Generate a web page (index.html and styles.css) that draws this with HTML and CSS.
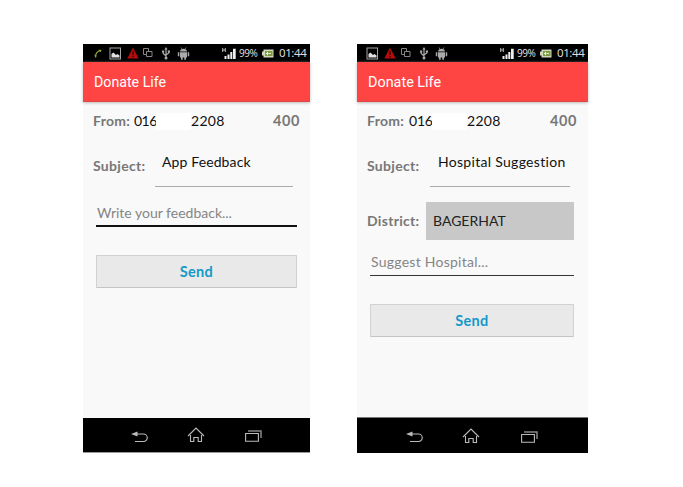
FILE: index.html
```html
<!DOCTYPE html>
<html lang="en">
<head>
<meta charset="utf-8">
<title>Donate Life</title>
<link rel="stylesheet" href="styles.css">
</head>
<body>
<svg width="0" height="0" class="defs">
  <symbol id="call" viewBox="0 0 8 9"><path d="M1.500 8C1.500 5 3 2.500 6 1.500" fill="none" stroke="#8ea63a" stroke-width="1.100"/><path d="M4.500 .8l3 0-.6 2.200-1.500-.5M.5 5.500l2 .8-.3 2.200H1z" fill="#8ea63a"/></symbol>
  <symbol id="image" viewBox="0 0 13 13"><rect x="1" y="1" width="10.500" height="11" fill="none" stroke="#a5a5a5"/><path d="M2.500 10.500V7l2-1.500L7 8l1.500-1L10.500 8.500v2z" fill="#e0e0e0"/></symbol>
  <symbol id="warn" viewBox="0 0 12 12"><path d="M6 .5L11.700 11.500H.3z" fill="#b50d0d"/><path d="M6 4v4M6 9v1.300" stroke="#3b0000" stroke-width="1.300"/></symbol>
  <symbol id="copies" viewBox="0 0 10 10"><path d="M3.500 6.500H.5v-6h5v3M3.500 3.500h5.500v5H3.500z" fill="none" stroke="#858585" stroke-width="1"/></symbol>
  <symbol id="usb" viewBox="0 0 8 13"><path d="M4 2v9M1.200 4v2.500L4 9M6.800 4v2L4 8" fill="none" stroke="#aaa" stroke-width="1.200"/><path d="M4 0l1.600 2.500H2.400zM0 3.500h2.200v2H0zM5.800 3.500H8v2H5.800z" fill="#aaa"/><circle cx="4" cy="11" r="1.500" fill="#aaa"/></symbol>
  <symbol id="robot" viewBox="0 0 13 13"><path d="M3 4.500C3.200 2.800 4.500 1.800 6.500 1.800S9.800 2.800 10 4.500zM3 5.200h7v5.300H9v2.200H7.300v-2.200H5.700v2.200H4v-2.200H3zM.8 5.300h1.500v4H.8zM10.700 5.300h1.500v4h-1.500z" fill="#aaa"/><path d="M4 .5l1 1.800M9 .5l-1 1.800" stroke="#aaa" stroke-width=".7"/></symbol>
  <symbol id="bars" viewBox="0 0 14 11"><path d="M2.500 8h2v3h-2zM5.500 6.500h2V11h-2zM8.300 4h2v7h-2zM11 .8h2.700V11H11z" fill="#eee"/><path d="M.7 0v4M3.300 0v4M.7 2h2.600" stroke="#ccc" stroke-width=".9"/></symbol>
  <symbol id="battery" viewBox="0 0 12 9"><path d="M1.500 .5h10v8h-10zM0 2.500h2v4H0z" fill="#d0d7bd"/><path d="M3 2h7.500v5H3z" fill="#7e9a45"/><path d="M4 4.500h2.500M5.500 2.800v3.400M7 4.500h2" stroke="#edf3df" stroke-width="1"/></symbol>
  <symbol id="back" viewBox="0 0 17 12"><path d="M4 3h8.500a3.500 3.500 0 0 1 0 7.500H4" fill="none" stroke="#bbb" stroke-width="1.100"/><path d="M0 3L6.500 .6v4.800z" fill="#bbb"/></symbol>
  <symbol id="home" viewBox="0 0 18 16"><path d="M1 9L9 1l8 8M3.500 8v6.500h3.300v-4h4.400v4h3.300V8" fill="none" stroke="#bbb" stroke-width="1.100"/></symbol>
  <symbol id="recent" viewBox="0 0 17 12"><path d="M.6 3.500h12.800v7.700H.6z" fill="none" stroke="#bbb" stroke-width="1.100"/><path d="M3 1h13v7" fill="none" stroke="#888" stroke-width="1.500"/></symbol>
</svg>
<main class="sheet">
  <section class="phone feedback">
    <div class="status">
      <svg class="i-call"><use href="#call"/></svg><svg class="i-image"><use href="#image"/></svg><svg class="i-warn"><use href="#warn"/></svg><svg class="i-copies"><use href="#copies"/></svg><svg class="i-usb"><use href="#usb"/></svg><svg class="i-robot"><use href="#robot"/></svg>
      <div class="right"><svg class="i-bars"><use href="#bars"/></svg><span class="pct">99%</span><svg class="i-battery"><use href="#battery"/></svg><span class="time">01:44</span></div>
    </div>
    <header class="bar">Donate Life</header>
    <div class="content">
      <div class="row from"><b class="lbl">From:</b><span class="num">016</span><span class="gap"></span><span class="num">2208</span><b class="count">400</b></div>
      <div class="row subject"><b class="lbl">Subject:</b><span class="field">App Feedback</span></div>
      <div class="message">Write your feedback...</div>
      <button class="send">Send</button>
    </div>
    <nav class="nav"><svg class="i-back"><use href="#back"/></svg><svg class="i-home"><use href="#home"/></svg><svg class="i-recent"><use href="#recent"/></svg></nav>
  </section>
  <section class="phone hospital">
    <div class="status">
      <svg class="i-image"><use href="#image"/></svg><svg class="i-warn"><use href="#warn"/></svg><svg class="i-copies"><use href="#copies"/></svg><svg class="i-usb"><use href="#usb"/></svg><svg class="i-robot"><use href="#robot"/></svg>
      <div class="right"><svg class="i-bars"><use href="#bars"/></svg><span class="pct">99%</span><svg class="i-battery"><use href="#battery"/></svg><span class="time">01:44</span></div>
    </div>
    <header class="bar">Donate Life</header>
    <div class="content">
      <div class="row from"><b class="lbl">From:</b><span class="num">016</span><span class="gap"></span><span class="num">2208</span><b class="count">400</b></div>
      <div class="row subject"><b class="lbl">Subject:</b><span class="field">Hospital Suggestion</span></div>
      <div class="row district"><b class="lbl">District:</b><span class="select">BAGERHAT</span></div>
      <div class="message">Suggest Hospital...</div>
      <button class="send">Send</button>
    </div>
    <nav class="nav"><svg class="i-back"><use href="#back"/></svg><svg class="i-home"><use href="#home"/></svg><svg class="i-recent"><use href="#recent"/></svg></nav>
  </section>
</main>
</body>
</html>
```
FILE: styles.css
```css
* { box-sizing: border-box; }
body { margin: 0; background: #fff; font-family: Lato, sans-serif; font-size: 14px; line-height: 18px; color: #222; font-variant-ligatures: none; }
svg { display: block; flex: none; }
.defs { display: none; }
.sheet { display: flex; align-items: flex-start; height: 487px; padding: 44px 0 0 83px; gap: 47px; }
.phone { display: flex; flex-direction: column; width: 227px; height: 409px; background: #f9f9f9; }
.hospital { width: 231px; }

.status { display: flex; align-items: center; height: 18px; flex: none; background: #000; padding: 0 4px 0 11px; }
.hospital .status { padding-left: 9px; }
.i-call { width: 8px; height: 9px; margin-right: 7px; }
.i-image { width: 13px; height: 13px; margin-right: 5px; }
.i-warn { width: 12px; height: 12px; margin-right: 4px; }
.i-copies { width: 10px; height: 10px; margin: -1px 9px 0 0; }
.i-usb { width: 8px; height: 13px; margin-right: 7px; }
.i-robot { width: 13px; height: 13px; }
.hospital .i-copies { margin-left: 1px; }
.right { display: flex; align-items: center; margin-left: auto; color: #ddd; font-family: "Noto Sans", sans-serif; }
.i-bars { width: 14px; height: 11px; margin-right: 3px; }
.pct { width: 19px; font-size: 10px; letter-spacing: -.5px; margin-right: 4px; }
.i-battery { width: 12px; height: 9px; margin-right: 5px; }
.time { width: 27px; font-size: 11.500px; letter-spacing: -.4px; white-space: nowrap; }

.bar { display: flex; align-items: center; flex: none; height: 40px; padding: 1px 0 0 11px; background: #ff4444; color: #fff; font: 14.200px Roboto, sans-serif; border-bottom: 1px solid #df4545; box-shadow: 0 1px 3px #bbb; }
.hospital .bar { font-size: 14.400px; }

.content { flex: 1; padding: 0 13px; }
.row { display: flex; align-items: center; margin: 0 -3px; }
.lbl, .count { font-weight: 700; color: #777; letter-spacing: .3px; }
.from { height: 38px; }
.from .lbl { width: 41px; }
.num { font-size: 14px; color: #111; width: 22px; }
.num + .gap { width: 35px; height: 17px; background: #fff; }
.hospital .from .lbl { width: 42px; }
.gap + .num { width: 36px; letter-spacing: .3px; }
.num:not(.gap + .num) { letter-spacing: -.5px; }
.hospital .num:not(.gap + .num) { width: 23px; letter-spacing: -.2px; }
.count { margin-left: auto; letter-spacing: .6px; font-size: 14.500px; }
.subject { height: 47px; align-items: stretch; }
.subject .lbl { width: 62px; padding-top: 17px; }
.field { width: 138px; height: 47px; padding: 13px 0 0 7px; border-bottom: 1px solid #aaa; white-space: nowrap; color: #111; letter-spacing: .12px; }
.hospital .field { width: 140px; padding-left: 8px; letter-spacing: .3px; }
.hospital .subject .lbl { width: 63px; }
.message { height: 40px; padding: 17px 0 0 1px; border-bottom: 2px solid #111; color: #858585; white-space: nowrap; }
.send { display: block; width: 100%; height: 33px; margin: 28px 0 0; padding: 0; background: #e9e9e9; border: 1px solid #d2d2d2; border-bottom-color: #c4c4c4; border-radius: 1px; font: 700 14.500px/18px Lato, sans-serif; letter-spacing: .3px; color: #1499c9; }

.district { height: 38px; margin-top: 15px; }
.district .lbl { width: 59px; }
.select { flex: 1; height: 38px; padding: 10px 0 0 7px; background: #c8c8c8; color: #222; }
.hospital .content { padding-right: 14px; }
.hospital .district { margin-right: 0; }
.hospital .message { height: 36px; padding-top: 13px; border-bottom: 1px solid #333; letter-spacing: .25px; }

.nav { display: flex; align-items: center; flex: none; height: 35px; padding-left: 48px; background: #000; border-bottom: 1px solid #999; }
.hospital .nav { height: 36px; border: 0; border-top: 1px solid #777; padding-left: 49px; }
.i-back { width: 17px; height: 12px; margin: 3px 39px 0 0; }
.i-home { width: 18px; height: 16px; margin-right: 40px; }
.i-recent { width: 17px; height: 12px; margin-top: 2px; }
.hospital .i-home { margin-right: 41px; }
```
